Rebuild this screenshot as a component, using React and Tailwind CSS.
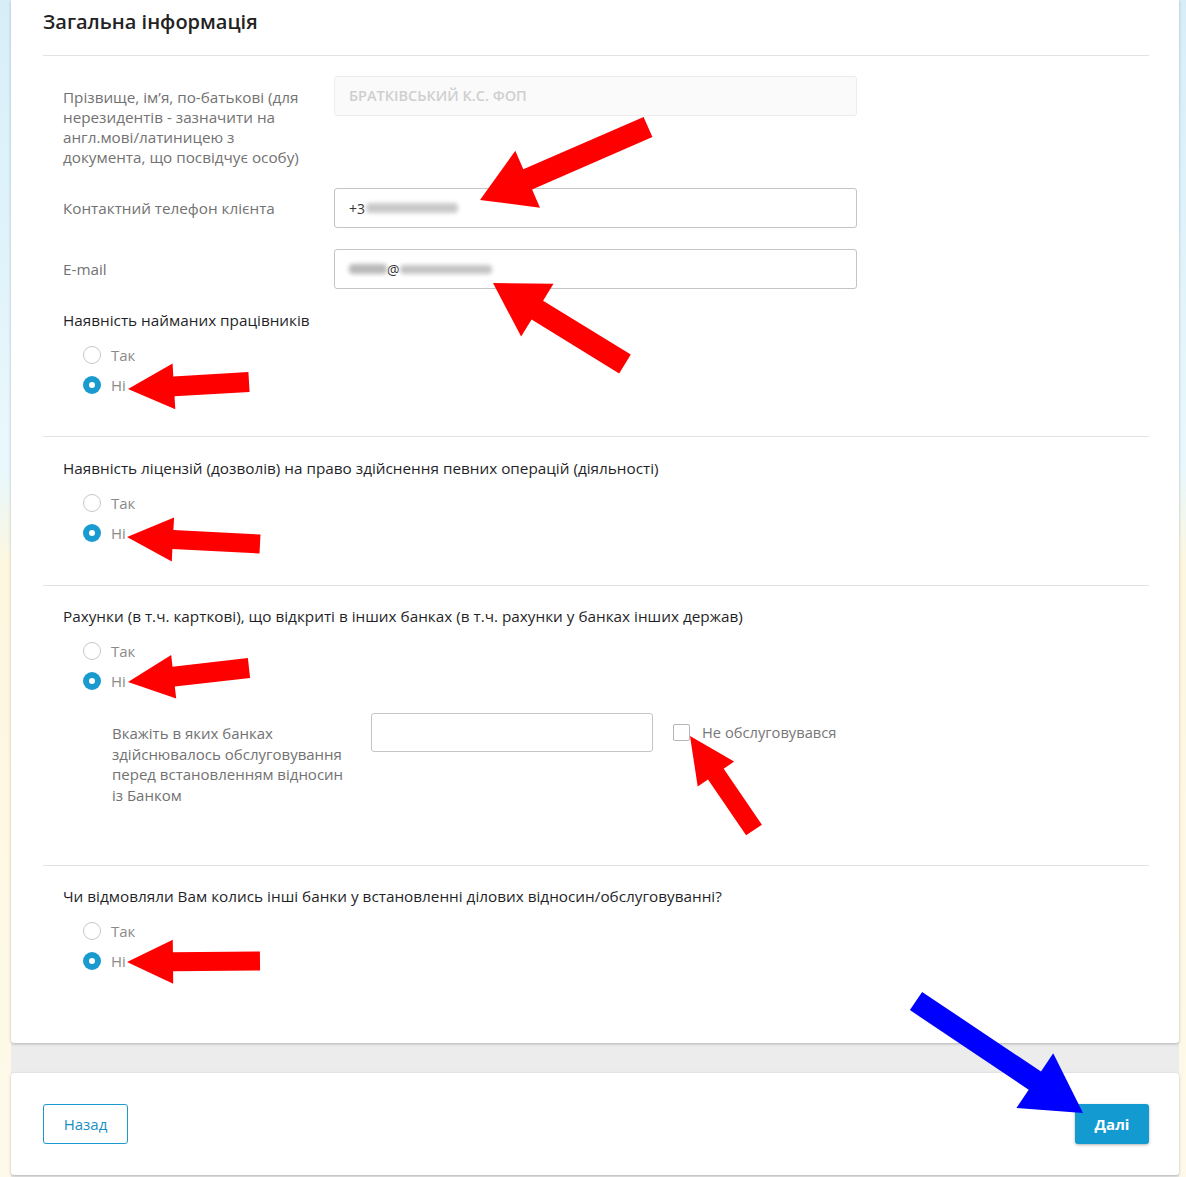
import React from 'react'

const arrows = [
  { x1: 648, y1: 127, x2: 480, y2: 200, w: 22, hw: 62, hl: 52, c: '#ff0000' },
  { x1: 625, y1: 364, x2: 493, y2: 283, w: 22, hw: 62, hl: 52, c: '#ff0000' },
  { x1: 249, y1: 382, x2: 128, y2: 389, w: 20, hw: 46, hl: 46, c: '#ff0000' },
  { x1: 260, y1: 544, x2: 127, y2: 537, w: 19, hw: 44, hl: 46, c: '#ff0000' },
  { x1: 249, y1: 668, x2: 128, y2: 682, w: 20, hw: 44, hl: 46, c: '#ff0000' },
  { x1: 754, y1: 830, x2: 690, y2: 736, w: 19, hw: 44, hl: 46, c: '#ff0000' },
  { x1: 260, y1: 961, x2: 127, y2: 962, w: 19, hw: 44, hl: 46, c: '#ff0000' },
  { x1: 916, y1: 1001, x2: 1083, y2: 1113, w: 22, hw: 66, hl: 58, c: '#0000ff' },
]

function arrowPoints(a) {
  const dx = a.x2 - a.x1
  const dy = a.y2 - a.y1
  const len = Math.hypot(dx, dy)
  const ux = dx / len, uy = dy / len
  const nx = -uy, ny = ux
  const bx = a.x2 - ux * a.hl, by = a.y2 - uy * a.hl
  const pts = [
    [a.x1 + nx * a.w / 2, a.y1 + ny * a.w / 2],
    [bx + nx * a.w / 2, by + ny * a.w / 2],
    [bx + nx * a.hw / 2, by + ny * a.hw / 2],
    [a.x2, a.y2],
    [bx - nx * a.hw / 2, by - ny * a.hw / 2],
    [bx - nx * a.w / 2, by - ny * a.w / 2],
    [a.x1 - nx * a.w / 2, a.y1 - ny * a.w / 2],
  ]
  return pts.map(p => p[0].toFixed(1) + ',' + p[1].toFixed(1)).join(' ')
}

function Radio({ label, checked }) {
  return (
    <div className='flex items-center h-[30px] pl-10'>
      {checked ? (
        <span className='w-[18px] h-[18px] rounded-full bg-[#1a9bd0] flex items-center justify-center'>
          <span className='w-[6px] h-[6px] rounded-full bg-white'></span>
        </span>
      ) : (
        <span className='w-[18px] h-[18px] rounded-full border border-[#c8c8c8] bg-white'></span>
      )}
      <span className='ml-[10px] text-[15px] text-[#8a8a8a]'>{label}</span>
    </div>
  )
}

function YesNo({ title }) {
  return (
    <div>
      <p className='pl-5 text-[15.3px] leading-5 text-[#1f1f28]'>{title}</p>
      <div className='mt-[10px]'>
        <Radio label='Так' />
        <Radio label='Ні' checked />
      </div>
    </div>
  )
}

function Field({ label, children, top = 'pt-0' }) {
  return (
    <div className='flex pl-5'>
      <div className={'w-[271px] pr-5 text-[15.25px] leading-5 text-[#727272] font-medium ' + top}>{label}</div>
      {children}
    </div>
  )
}

const inputCls = 'w-[523px] h-10 rounded-[3px] border border-[#c4c4c4] bg-white flex items-center px-[14px] text-[14px] text-[#333]'

export default function App() {
  return (
    <div className="relative w-[1186px] h-[1177px] overflow-hidden font-['Open_Sans',sans-serif] bg-[linear-gradient(180deg,#d7eef9_0%,#e9f8fc_40%,#fdf7e0_48%,#fef9e9_100%)]">
      <div className='ml-[11px] w-[1168px] h-full bg-[#ececec] flex flex-col'>
        <div className='bg-white h-[1043px] rounded-b-[3px] shadow-[0_1px_3px_rgba(0,0,0,0.25)] pl-8 pr-[30px] pt-[8px]'>
          <h2 className='text-[20px] leading-7 font-semibold text-[#222] pb-[19px] border-b border-[#e2e2e2]'>Загальна інформація</h2>

          <div className='pt-[20px]'>
            <Field label={"Прізвище, ім’я, по-батькові (для нерезидентів - зазначити на англ.мові/латиницею з документа, що посвідчує особу)"} top='pt-[11px]'>
              <div className='w-[523px] h-10 rounded-[3px] border border-[#ededed] bg-[#fafafa] flex items-center px-[14px] text-[14.5px] font-semibold text-[#cfcfcf]'>БРАТКІВСЬКИЙ К.С. ФОП</div>
            </Field>
            <div className='mt-[21px]'>
              <Field label='Контактний телефон клієнта' top='pt-[10px]'>
                <div className={inputCls}>
                  <span>+3</span>
                  <span className='ml-[1px] w-[92px] h-[10px] bg-[#c9c9c9] blur-[2px] rounded-sm'></span>
                </div>
              </Field>
            </div>
            <div className='mt-[21px]'>
              <Field label='E-mail' top='pt-[10px]'>
                <div className={inputCls}>
                  <span className='w-[38px] h-[10px] bg-[#b9b9b9] blur-[2px] rounded-sm'></span>
                  <span>@</span>
                  <span className='w-[92px] h-[9px] bg-[#c4c4c4] blur-[2px] rounded-sm'></span>
                </div>
              </Field>
            </div>
            <div className='mt-[21px] pb-[36px] border-b border-[#e2e2e2]'>
              <YesNo title='Наявність найманих працівників' />
            </div>
          </div>

          <div className='pt-[21px] pb-[37px] border-b border-[#e2e2e2]'>
            <YesNo title='Наявність ліцензій (дозволів) на право здійснення певних операцій (діяльності)' />
          </div>

          <div className='pt-[20px] pb-[60px] border-b border-[#e2e2e2]'>
            <YesNo title='Рахунки (в т.ч. карткові), що відкриті в інших банках (в т.ч. рахунки у банках інших держав)' />
            <div className='flex mt-[17px] pl-[69px]'>
              <div className='w-[259px] pr-4 pt-[10px] text-[15px] leading-[20.5px] font-medium text-[#727272]'>
                Вкажіть в яких банках здійснювалось обслуговування перед встановленням відносин із Банком
              </div>
              <div className='w-[282px] h-[39px] rounded-[3px] border border-[#c4c4c4] bg-white'></div>
              <div className='flex items-center ml-5 mt-[11px] h-[17px]'>
                <span className='w-[17px] h-[17px] rounded-[2px] border border-[#b5b5b5] bg-white'></span>
                <span className='ml-3 text-[14.7px] text-[#777]'>Не обслуговувався</span>
              </div>
            </div>
          </div>

          <div className='pt-[20px]'>
            <YesNo title='Чи відмовляли Вам колись інші банки у встановленні ділових відносин/обслуговуванні?' />
          </div>
        </div>

        <div className='mt-[30px] bg-white h-[102px] rounded-[3px] shadow-[0_1px_3px_rgba(0,0,0,0.25)] pl-8 pr-[30px] pt-[31px] flex justify-between items-start'>
          <button className='w-[85px] h-10 rounded-[3px] border border-[#1a9bd0] text-[15px] text-[#1a8fc4] bg-white'>Назад</button>
          <button className='w-[74px] h-10 rounded-[3px] bg-[#139bd1] text-[15px] font-bold text-white shadow-[0_1px_3px_rgba(0,0,0,0.3)]'>Далі</button>
        </div>
      </div>

      <svg className='absolute inset-0 pointer-events-none' width='1186' height='1177'>
        {arrows.map((a, i) => (
          <polygon key={i} points={arrowPoints(a)} fill={a.c} />
        ))}
      </svg>
    </div>
  )
}
